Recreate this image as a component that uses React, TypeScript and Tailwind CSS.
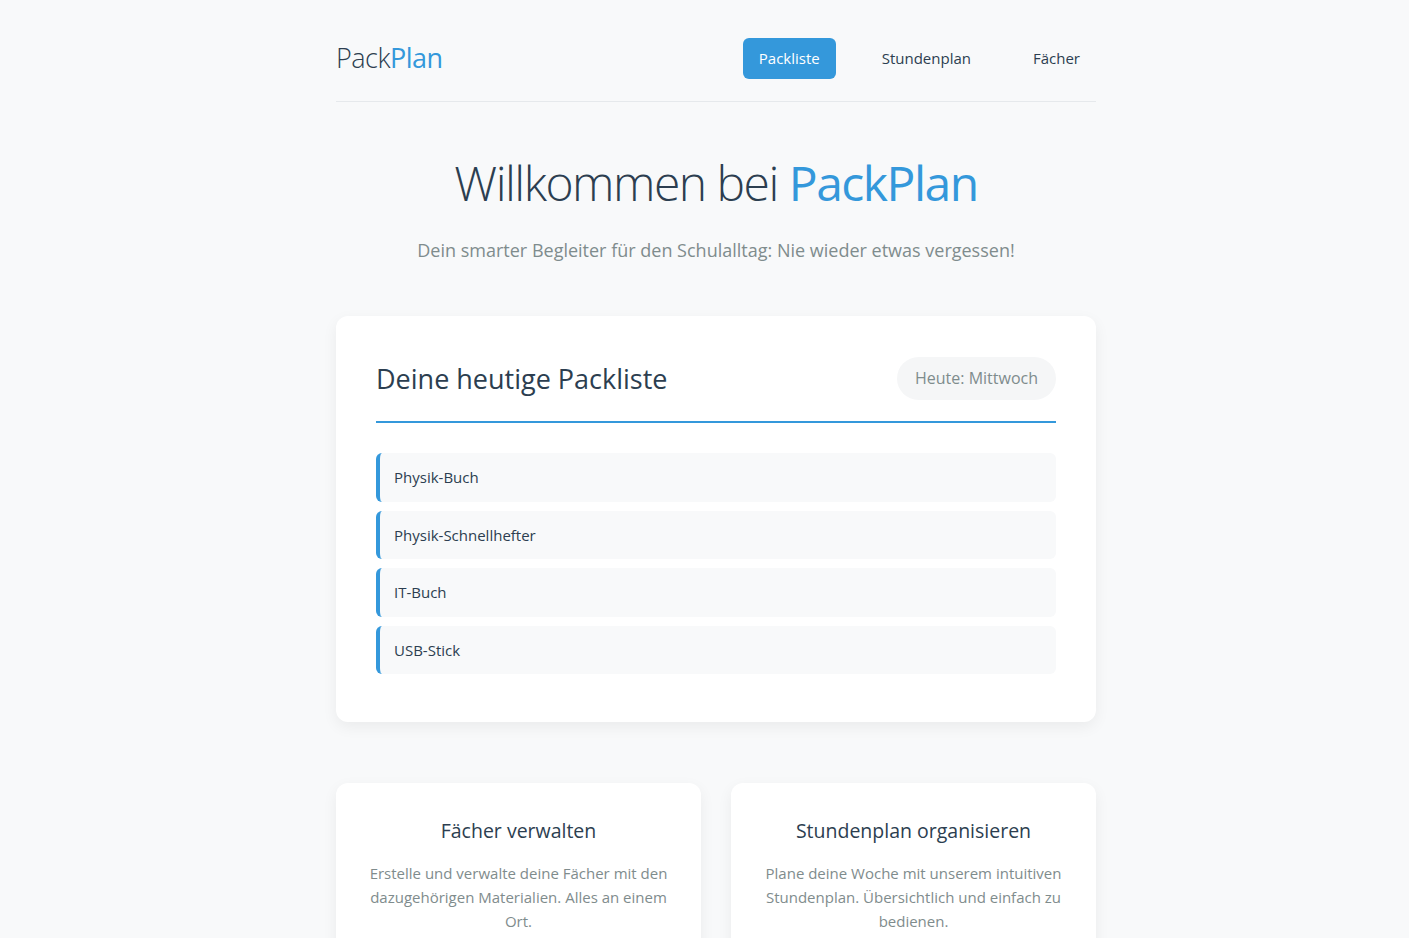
const items = ['Physik-Buch', 'Physik-Schnellhefter', 'IT-Buch', 'USB-Stick'];

const features = [
  {
    title: 'Fächer verwalten',
    text: 'Erstelle und verwalte deine Fächer mit den dazugehörigen Materialien. Alles an einem Ort.',
  },
  {
    title: 'Stundenplan organisieren',
    text: 'Plane deine Woche mit unserem intuitiven Stundenplan. Übersichtlich und einfach zu bedienen.',
  },
];

export default function App() {
  return (
    <div className="min-h-screen bg-[#f8f9fa] font-['Open_Sans',sans-serif] text-[#2c3e50]">
      <div className="flex justify-center pl-[23px]">
        <div className="w-[760px]">
          {/* Header */}
          <header className="flex items-center justify-between border-b border-[#e6e9ec] pt-[37px] pb-[22px]">
            <div className="text-[27px] leading-[42px] font-light tracking-[-0.5px]">
              <span className="text-[#2c3e50]">Pack</span>
              <span className="text-[#3498db] font-normal">Plan</span>
            </div>
            <nav className="flex items-center gap-[30px] text-[15px]">
              <a className="rounded-[6px] bg-[#3498db] px-4 py-[10px] leading-[21px] text-white">Packliste</a>
              <a className="px-4 py-[10px] leading-[21px] text-[#2c3e50]">Stundenplan</a>
              <a className="px-4 py-[10px] leading-[21px] text-[#2c3e50]">Fächer</a>
            </nav>
          </header>

          {/* Hero */}
          <section className="pt-[48px] pb-[52px] text-center">
            <h1 className="text-[48px] leading-[65px] font-light tracking-[-1.5px]">
              Willkommen bei <span className="text-[#3498db] font-normal">PackPlan</span>
            </h1>
            <p className="mt-[22px] text-[18px] leading-[27px] text-[#7f8c8d]">
              Dein smarter Begleiter für den Schulalltag: Nie wieder etwas vergessen!
            </p>
          </section>

          {/* Packliste */}
          <div className="rounded-[12px] bg-white px-10 pt-[41px] pb-[48px] shadow-[0_5px_15px_rgba(0,0,0,0.06)]">
            <div className="flex items-center justify-between border-b-2 border-[#3498db] pb-[21px]">
              <h2 className="text-[27px] leading-[42px]">Deine heutige Packliste</h2>
              <span className="rounded-full bg-[#f5f6f7] px-[18px] py-[10px] text-[16px] leading-[23px] text-[#7f8c8d]">
                Heute: Mittwoch
              </span>
            </div>
            <ul className="mt-[30px] flex flex-col gap-[9px]">
              {items.map(item => (
                <li
                  key={item}
                  className="rounded-[6px] border-l-4 border-[#3498db] bg-[#f8f9fa] px-[14px] py-[12px] text-[15px] leading-[24.5px] text-[#2c3e50]"
                >
                  {item}
                </li>
              ))}
            </ul>
          </div>

          {/* Features */}
          <div className="mt-[61px] grid grid-cols-2 gap-[30px]">
            {features.map(f => (
              <div key={f.title} className="rounded-[12px] bg-white px-8 pt-[33px] pb-8 text-center shadow-[0_5px_15px_rgba(0,0,0,0.06)]">
                <h3 className="text-[19.5px] leading-[30px]">{f.title}</h3>
                <p className="mt-[15px] text-[15px] leading-[24px] text-[#7f8c8d]">{f.text}</p>
              </div>
            ))}
          </div>
        </div>
      </div>
    </div>
  );
}
